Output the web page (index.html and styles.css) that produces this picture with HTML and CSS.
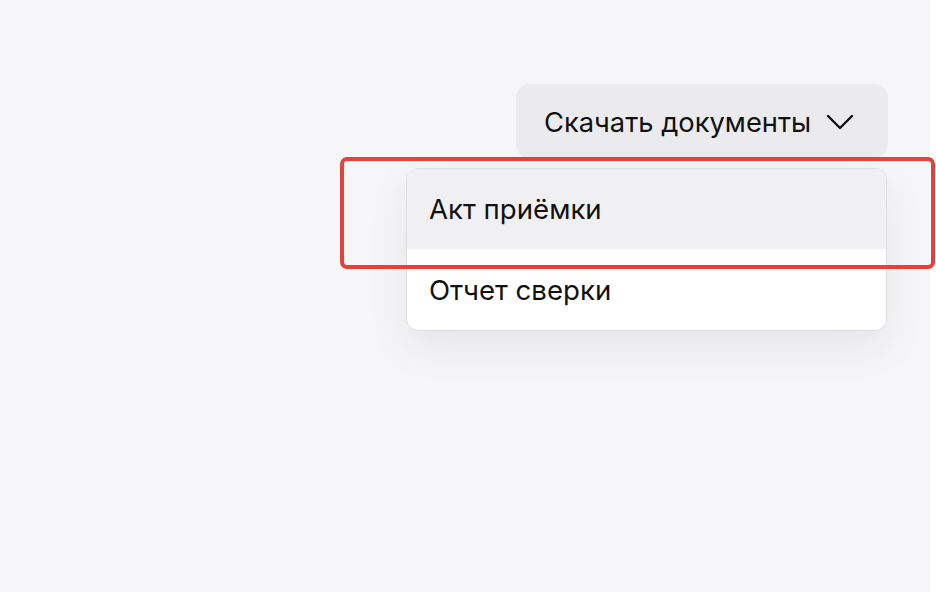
FILE: index.html
```html
<!DOCTYPE html>
<html lang="ru">
<head>
<meta charset="utf-8">
<title>Скачать документы</title>
<link rel="stylesheet" href="styles.css">
</head>
<body>
<div class="page">
  <div class="docs">
    <button class="docs_btn">
      <span class="docs_label">Скачать документы</span>
      <svg class="chevron" width="28" height="16" viewBox="0 0 28 16"><path d="M2 2 L14 14 L26 2" fill="none" stroke="#111" stroke-width="2.4" stroke-linecap="round" stroke-linejoin="round"/></svg>
    </button>
    <div class="docs_menu">
      <div class="docs_item docs_item_active">Акт приёмки</div>
      <div class="docs_item">Отчет сверки</div>
    </div>
  </div>
  <div class="mark"></div>
</div>
</body>
</html>
```
FILE: styles.css
```css
body {
  margin: 0;
  background: #ffffff;
  font-family: Inter, "Noto Sans", sans-serif;
  color: #111111;
}

.page {
  position: relative;
  width: 930px;
  height: 592px;
  background: #f6f6f8;
  box-sizing: border-box;
  padding: 84px 42px 0 0;
}

.docs {
  display: flex;
  flex-direction: column;
  align-items: flex-end;
}

.docs_btn {
  display: flex;
  align-items: center;
  justify-content: space-between;
  width: 372px;
  height: 74px;
  padding: 3px 34px 0 28px;
  border: none;
  border-radius: 14px;
  background: #ebebed;
  font-family: inherit;
  font-size: 27.3px;
  color: #111111;
}

.docs_label {
  white-space: nowrap;
}

.chevron {
  flex-shrink: 0;
  margin-top: -1px;
}

.docs_menu {
  width: 479px;
  margin: 10px 1px 0 0;
  border: 1px solid #dedee3;
  border-radius: 12px;
  background: #ffffff;
  overflow: hidden;
  box-shadow: 0 16px 40px rgba(40, 40, 60, 0.08);
}

.docs_item {
  height: 80px;
  padding: 0 22px;
  display: flex;
  align-items: center;
  font-size: 27.6px;
}

.docs_item + .docs_item {
  height: 81px;
}

.docs_item_active {
  background: #f0f0f2;
}

.mark {
  position: absolute;
  left: 340px;
  top: 157px;
  width: 595px;
  height: 112px;
  box-sizing: border-box;
  border: 4px solid #e5413a;
  border-radius: 7px;
}
```
